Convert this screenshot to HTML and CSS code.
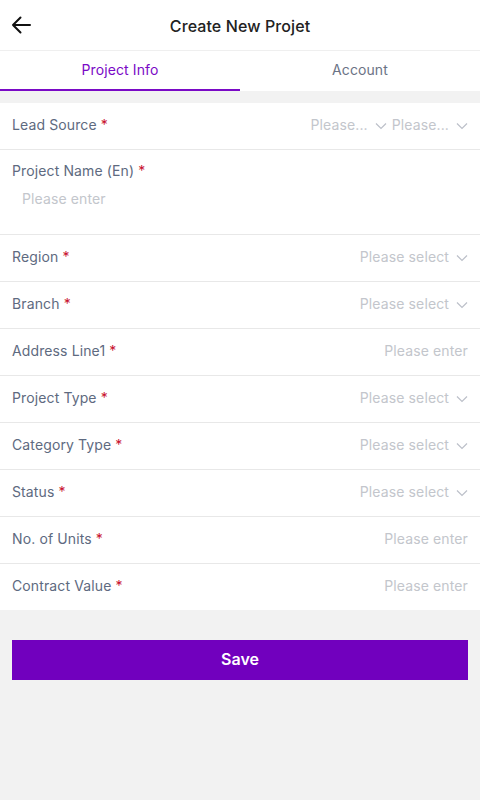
FILE: index.html
```html
<!DOCTYPE html>
<html>
<head>
<meta charset="utf-8">
<link rel="stylesheet" href="styles.css">
</head>
<body>
<div class="page">
  <header class="topbar">
    <span class="back">
      <svg width="20" height="18" viewBox="0 0 20 18"><path d="M19 9H2M9.5 1.5L2 9l7.5 7.5" fill="none" stroke="#111" stroke-width="2" stroke-linecap="round" stroke-linejoin="round"/></svg>
    </span>
    <h1 class="title">Create New Projet</h1>
  </header>
  <nav class="tabs">
    <div class="tab active">Project Info</div>
    <div class="tab">Account</div>
  </nav>
  <section class="form">
    <div class="row">
      <div class="label">Lead Source <span class="req">*</span></div>
      <div class="value">
        <span class="ph">Please...</span><svg class="chev" viewBox="0 0 12 8"><path d="M1 1.5l5 5 5-5" fill="none" stroke="#bcc0c9" stroke-width="1.2"/></svg>
        <span class="ph">Please...</span><svg class="chev" viewBox="0 0 12 8"><path d="M1 1.5l5 5 5-5" fill="none" stroke="#bcc0c9" stroke-width="1.2"/></svg>
      </div>
    </div>
    <div class="row tall">
      <div class="label">Project Name (En) <span class="req">*</span></div>
      <div class="ph indent">Please enter</div>
    </div>
    <div class="row">
      <div class="label">Region <span class="req">*</span></div>
      <div class="value"><span class="ph">Please select</span><svg class="chev" viewBox="0 0 12 8"><path d="M1 1.5l5 5 5-5" fill="none" stroke="#bcc0c9" stroke-width="1.2"/></svg></div>
    </div>
    <div class="row">
      <div class="label">Branch <span class="req">*</span></div>
      <div class="value"><span class="ph">Please select</span><svg class="chev" viewBox="0 0 12 8"><path d="M1 1.5l5 5 5-5" fill="none" stroke="#bcc0c9" stroke-width="1.2"/></svg></div>
    </div>
    <div class="row">
      <div class="label">Address Line1 <span class="req">*</span></div>
      <div class="value"><span class="ph">Please enter</span></div>
    </div>
    <div class="row">
      <div class="label">Project Type <span class="req">*</span></div>
      <div class="value"><span class="ph">Please select</span><svg class="chev" viewBox="0 0 12 8"><path d="M1 1.5l5 5 5-5" fill="none" stroke="#bcc0c9" stroke-width="1.2"/></svg></div>
    </div>
    <div class="row">
      <div class="label">Category Type <span class="req">*</span></div>
      <div class="value"><span class="ph">Please select</span><svg class="chev" viewBox="0 0 12 8"><path d="M1 1.5l5 5 5-5" fill="none" stroke="#bcc0c9" stroke-width="1.2"/></svg></div>
    </div>
    <div class="row">
      <div class="label">Status <span class="req">*</span></div>
      <div class="value"><span class="ph">Please select</span><svg class="chev" viewBox="0 0 12 8"><path d="M1 1.5l5 5 5-5" fill="none" stroke="#bcc0c9" stroke-width="1.2"/></svg></div>
    </div>
    <div class="row">
      <div class="label">No. of Units <span class="req">*</span></div>
      <div class="value"><span class="ph">Please enter</span></div>
    </div>
    <div class="row">
      <div class="label">Contract Value <span class="req">*</span></div>
      <div class="value"><span class="ph">Please enter</span></div>
    </div>
  </section>
  <div class="actions">
    <button class="save">Save</button>
  </div>
</div>
</body>
</html>
```
FILE: styles.css
```css
* { box-sizing: border-box; }
html, body { margin: 0; padding: 0; }
body {
  background: #f2f2f2;
  font-family: Inter, "Noto Sans", "Liberation Sans", sans-serif;
  width: 480px;
  height: 800px;
}
.page { display: flex; flex-direction: column; }
.topbar {
  height: 51px;
  background: #fff;
  border-bottom: 1px solid #efefef;
  display: flex;
  align-items: center;
  justify-content: center;
  position: relative;
  padding-top: 1px;
}
.back {
  position: absolute;
  left: 11px;
  top: 16px;
  display: flex;
}
.title {
  margin: 0;
  font-size: 16px;
  font-weight: 500;
  color: #222;
  letter-spacing: 0.1px;
}
.tabs {
  display: flex;
  background: #fff;
  height: 40px;
}
.tab {
  flex: 1;
  display: flex;
  align-items: center;
  justify-content: center;
  font-size: 14px;
  color: #6b7385;
  border-bottom: 2px solid transparent;
  padding-bottom: 2px;
  letter-spacing: 0.1px;
}
.tab.active {
  color: #7a0ac6;
  border-bottom-color: #7a0ac6;
}
.form {
  margin-top: 12px;
  background: #fff;
}
.row {
  height: 47px;
  padding: 0 12px 3px;
  display: flex;
  align-items: center;
  justify-content: space-between;
  border-bottom: 1px solid #e8e8e8;
  font-size: 14px;
  letter-spacing: 0.12px;
}
.row:last-child { border-bottom: none; height: 46px; }
.row.tall {
  height: 85px;
  flex-direction: column;
  align-items: flex-start;
  justify-content: flex-start;
  padding-top: 12px;
}
.label { color: #5e6a80; }
.req { color: #c8102e; }
.value { display: flex; align-items: center; }
.ph { color: #c3c6cc; }
.indent { padding-left: 10px; margin-top: 11px; }
.chev { width: 12px; height: 8px; margin-left: 7px; margin-right: 0; margin-top: 2px; }
.chev + .ph { margin-left: 5px; }
.actions { padding: 30px 12px 0; }
.save {
  width: 100%;
  height: 40px;
  border: none;
  background: #7100be;
  color: #fff;
  font-family: inherit;
  font-size: 16px;
  font-weight: 600;
  padding-bottom: 3px;
}
```
